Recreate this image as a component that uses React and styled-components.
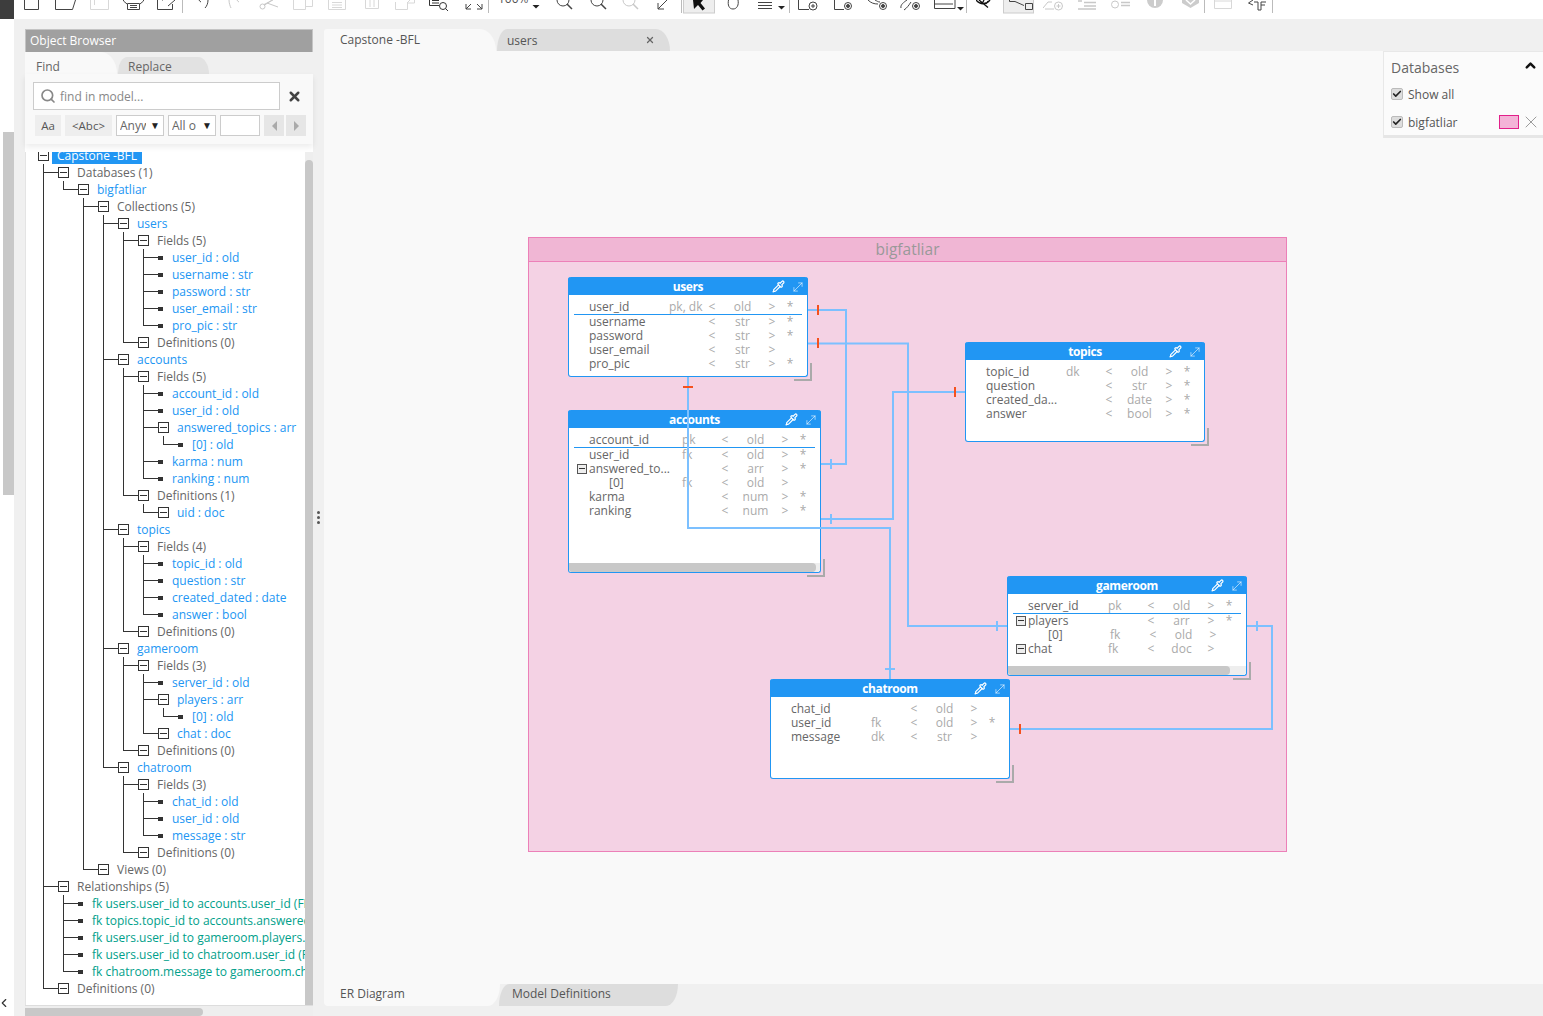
import React from 'react'
import styled, { createGlobalStyle } from 'styled-components'
import { MoveDiagonal, Pipette, Search, X, ChevronLeft, Check, ChevronUp } from 'lucide-react'

const Global = createGlobalStyle`
  html, body { margin: 0; height: 100%; overflow: hidden; background: #f0f0f0; }
  body { font-family: "Open Sans", "Liberation Sans", sans-serif; color: #666; }
  * { box-sizing: border-box; }
`

const Page = styled.div`
  display: flex;
  width: 1543px;
  height: 1016px;
  overflow: hidden;
`

const Rail = styled.div`
  flex: none;
  width: 14px;
  background: #fff;
  display: flex;
  flex-direction: column;
  color: #333;
`
const RailTop = styled.div`
  height: 19px;
  background: #3d3d3d;
`
const RailThumb = styled.div`
  margin: 113px 0 0 3px;
  height: 363px;
  background: #c8c8c8;
`
const RailChevron = styled.div`
  margin-top: auto;
  height: 23px;
  margin-left: -3px;
`

const Shell = styled.div`
  flex: 1;
  min-width: 0;
  display: flex;
  flex-direction: column;
`

/* ---------- toolbar ---------- */

const Toolbar = styled.div`
  flex: none;
  height: 19px;
  background: #fff;
  display: flex;
  align-items: flex-start;
  overflow: hidden;
`
const Tool = styled.svg`
  flex: none;
  margin-left: ${p => p.$gap}px;
  fill: none;
  stroke: ${p => p.$tone || '#444'};
  stroke-width: 1;
`
const ToolSep = styled.div`
  flex: none;
  width: 1px;
  height: 13px;
  margin-left: ${p => p.$gap}px;
  background: #bbb;
`
const ZoomValue = styled.span`
  flex: none;
  width: 30px;
  margin-left: ${p => p.$gap}px;
  margin-top: -9px;
  font-size: 12px;
  line-height: 16px;
  color: #555;
`

const LIGHT = '#d8d8d8'
const MID = '#c8c8c8'
const caret = (x, y = 5) => <path d={`M${x} ${y}h7l-3.5 3.5z`} fill="#222" stroke="none" />

const tools = [
  { x: 24, w: 15, d: <path d="M.5 0V9.5H14.5V0" /> },
  { x: 55, w: 21, d: <path d="M.5 0V9.5H17.5L20.5 0" /> },
  { x: 90, w: 19, tone: LIGHT, d: <path d="M.5 0V9.5H18.5V0M4.5 0V5" /> },
  { x: 123, w: 21, d: <path d="M4.5 3.5H16.5V9.5H4.5ZM.5 0V1L4 4M20.5 0V1L17 4M7 5.5H14M7 7.5H14" /> },
  { x: 157, w: 21, d: <path d="M.5 0V9.5H15.5V4M11 6L18 0M6 0H5" /> },
  { sep: 182 },
  { x: 197, w: 12, d: <path d="M2 0C2.5 1 3 1.500 4 2M11 0C11 3 10 6 8 8" /> },
  { x: 228, w: 12, tone: MID, d: <path d="M1 0C1 3 2 6 3 8M9 0C9.500 1 10 1.500 11 2" /> },
  { x: 259, w: 21, tone: MID, d: <g><circle cx="3.500" cy="6.500" r="2.500" /><path d="M5 4.500L14 0M5 5.500L13 0M8 3L19 7" /></g> },
  { x: 293, w: 21, tone: LIGHT, d: <path d="M.5 0V9.500H12.500V0M13 6.500H19.500V0" /> },
  { x: 328, w: 19, tone: LIGHT, d: <path d="M.5 0V9.500H17.500V0M4 2.500H14M4 5H14M4 7.500H14" /> },
  { x: 365, w: 14, tone: LIGHT, d: <path d="M.5 0V8.500H13.500V0M5 0V7M9 0V7" /> },
  { x: 395, w: 21, tone: LIGHT, d: <path d="M.5 2V9.500H12.500V3H19.500V0M12 3L15 0" /> },
  { x: 429, w: 20, tone: '#333', d: <g><circle cx="14" cy="6" r="3.500" /><path d="M.5 0V5.500H10M3 3H10M3 .5H10M16.500 8.500L19 11" /></g> },
  { x: 465, w: 18, d: <path d="M1 9L6 4M1 4V9H6M17 9L12 4M17 4V9H12" /> },
  { sep: 488 },
  { text: 498 },
  { x: 532, w: 8, d: caret(.5) },
  { x: 556, w: 17, d: <g><circle cx="7" cy="0" r="6" /><path d="M11 4L16 9" strokeWidth="1.500" /></g> },
  { x: 590, w: 17, d: <g><circle cx="7" cy="0" r="6" /><path d="M11 4L16 9" strokeWidth="1.500" /></g> },
  { x: 622, w: 18, tone: MID, d: <g><circle cx="7" cy="0" r="6" /><path d="M11 4L16 9" strokeWidth="1.500" /></g> },
  { x: 657, w: 11, d: <path d="M1 9L10 0M1 3V9H7" /> },
  { sep: 681 },
  { x: 683, w: 33, d: <g><rect x=".5" y="-1" width="31" height="14" fill="#eee" stroke="#ccc" /><path d="M10 0H20L17.500 3L22 8.500L19.500 10.500L15 5L11 9Z" fill="#111" stroke="none" /></g> },
  { x: 727, w: 13, d: <path d="M1.500 0C.5 5 2 9 6 9C10 9 12 5 11 0" /> },
  { x: 758, w: 29, d: <g><path d="M0 2.500H14M0 5.500H14M0 8.500H14" strokeWidth="1.200" />{caret(20, 6)}</g> },
  { sep: 789 },
  { x: 798, w: 21, d: <g><circle cx="15" cy="6" r="4" /><path d="M.5 0V9.500H11M13 6H17M15 4V8" /></g> },
  { x: 834, w: 20, d: <g><circle cx="14" cy="6" r="3.500" /><circle cx="14" cy="6" r="1.500" fill="#444" /><path d="M.5 0V9.500H10" /></g> },
  { x: 868, w: 21, d: <g><circle cx="15" cy="6" r="3.500" /><circle cx="15" cy="6" r="1.500" fill="#444" /><path d="M0 0C3 3 6 4 10 4M7 0C9 1 10 2 12 2" /></g> },
  { x: 900, w: 21, d: <g><circle cx="16" cy="6" r="3.500" /><circle cx="16" cy="6" r="1.500" fill="#444" /><path d="M1 8C0 5 4 2 7 0M4 10C7 8 9 5 11 2" /></g> },
  { x: 934, w: 31, d: <g><path d="M.5 0V8.500H21V0M.5 4H19" />{caret(23, 7)}</g> },
  { sep: 966 },
  { x: 976, w: 19, tone: '#111', d: <path d="M0 0C4 5 10 5 14 0M3 0L12 7.500M6 4L8 0M10 4L12 1" strokeWidth="1.300" /> },
  { x: 1003, w: 32, d: <g><rect x=".5" y="-1" width="30" height="14" fill="#eee" stroke="#ccc" /><path d="M6.500 0V1.500H12L21 5.500M22.500 3.500H29.500V9.500H22.500Z" /></g> },
  { x: 1043, w: 21, tone: MID, d: <g><circle cx="15.500" cy="6" r="4" /><path d="M0 8L5 2H9M2 9H11M13.500 6H17.500M15.500 4V8" /></g> },
  { x: 1077, w: 20, tone: MID, d: <path d="M7 2.500H19M7 6H19M1 9H19M1 1H5" strokeWidth="1.500" /> },
  { x: 1111, w: 20, tone: MID, d: <g><circle cx="4" cy="4.500" r="3.500" /><path d="M10 2.500H19M10 5.500H19" strokeWidth="1.500" /></g> },
  { x: 1146, w: 18, d: <g><circle cx="9" cy="0" r="8" fill="#ccc" stroke="none" /><path d="M9 0V6" stroke="#fff" strokeWidth="2" /></g> },
  { x: 1182, w: 17, d: <g><path d="M0 0H17V3L8.500 8L0 3Z" fill="#ccc" stroke="none" /><path d="M4 0L8.500 4L13 0" stroke="#fff" strokeWidth="1.500" /></g> },
  { sep: 1204 },
  { x: 1214, w: 18, tone: LIGHT, d: <path d="M.5 0V8.500H17.500V0M.5 1H17" /> },
  { x: 1248, w: 18, d: <path d="M5 0L.5 3L5 5M6 2H10V10H13V2H18M13 5H17" /> },
  { sep: 1272 }
]

function ToolRow() {
  let end = 14
  return (
    <Toolbar>
      {tools.map((t, i) => {
        const at = t.sep ?? t.text ?? t.x
        const gap = at - end
        if (t.sep) {
          end = at + 1
          return <ToolSep key={i} $gap={gap} />
        }
        if (t.text) {
          end = at + 30
          return <ZoomValue key={i} $gap={gap}>100%</ZoomValue>
        }
        end = at + t.w
        return (
          <Tool key={i} $gap={gap} $tone={t.tone} width={t.w} height="19" viewBox={`0 0 ${t.w} 19`}>
            {t.d}
          </Tool>
        )
      })}
    </Toolbar>
  )
}

/* ---------- object browser ---------- */

const Workspace = styled.div`
  flex: 1;
  min-height: 0;
  display: flex;
`
const Browser = styled.aside`
  flex: none;
  width: 288px;
  margin: 10px 0 0 11px;
  display: flex;
  flex-direction: column;
  background: #fff;
`
const BrowserTitle = styled.div`
  flex: none;
  height: 23px;
  padding-left: 4px;
  background: #a0a0a0;
  border: 1px solid #c4c4c4;
  border-bottom: 0;
  color: #fff;
  font-size: 12px;
  line-height: 22px;
`
const FindTabs = styled.div`
  flex: none;
  height: 22px;
  display: flex;
  background: #f0f0f0;
`
const FindTab = styled.div`
  width: ${p => (p.$active ? 92 : 91)}px;
  margin-left: ${p => (p.$active ? 0 : 1)}px;
  padding-left: ${p => (p.$active ? 11 : 10)}px;
  background: ${p => (p.$active ? '#f9f9f9' : '#e2e2e2')};
  border-radius: ${p => (p.$active ? '0 16px 0 0 / 0 22px 0 0' : '12px 14px 0 0 / 20px 22px 0 0')};
  font-size: 12px;
  height: ${p => (p.$active ? 22 : 17)}px;
  margin-top: ${p => (p.$active ? 0 : 5)}px;
  line-height: ${p => (p.$active ? 29 : 19)}px;
`
const FindArea = styled.div`
  flex: none;
  height: 70px;
  padding: 8px 8px 0;
  background: #f9f9f9;
  box-shadow: 0 3px 6px rgba(0, 0, 0, 0.08);
  position: relative;
  z-index: 1;
`
const FindRow = styled.div`
  display: flex;
  align-items: center;
`
const FindInput = styled.div`
  width: 247px;
  height: 28px;
  background: #fff;
  border: 1px solid #ccc;
  display: flex;
  align-items: center;
  gap: 4px;
  padding-left: 6px;
  color: #888;
  font-size: 12px;
`
const ClearButton = styled.div`
  display: flex;
  margin: 1px 0 0 7px;
  color: #444;
`
const OptionRow = styled.div`
  display: flex;
  margin: 5px 0 0 2px;
  gap: 4px;
`
const OptionButton = styled.div`
  width: ${p => p.$w}px;
  height: 21px;
  background: #eee;
  font-size: 11.5px;
  line-height: 21px;
  text-align: center;
  color: #555;
`
const OptionSelect = styled.div`
  width: 48px;
  height: 21px;
  background: #fff;
  border: 1px solid #ccc;
  display: flex;
  align-items: center;
  justify-content: space-between;
  padding: 0 3px;
  font-size: 12px;
  color: #666;
  overflow: hidden;
  & > span:first-child { width: 26px; overflow: hidden; white-space: nowrap; }
  & > span:last-child { font-size: 10px; color: #222; margin-top: -2px; }
`
const OptionField = styled.div`
  width: 40px;
  height: 21px;
  background: #fff;
  border: 1px solid #ccc;
`
const PagerButton = styled.div`
  width: 20px;
  height: 21px;
  margin-right: -2px;
  background: #e6e6e6;
  display: flex;
  align-items: center;
  justify-content: center;
  &::before {
    content: '';
    border: 5px solid transparent;
    border-left-color: ${p => (p.$dir === 'next' ? '#aaa' : 'transparent')};
    border-right-color: ${p => (p.$dir === 'prev' ? '#aaa' : 'transparent')};
    margin-left: ${p => (p.$dir === 'next' ? 5 : -5)}px;
  }
`
const TreePane = styled.div`
  flex: 1;
  min-height: 0;
  margin-top: 8px;
  display: flex;
  border-left: 1px solid #e4e4e4;
`
const TreeClip = styled.div`
  flex: 1;
  min-width: 0;
  overflow: hidden;
`
const VerticalBar = styled.div`
  flex: none;
  width: 8px;
  background: #eee;
  padding-top: 8px;
  &::before {
    content: '';
    display: block;
    height: 100%;
    background: #c8c8c8;
    border-radius: 4px 4px 0 0;
  }
`
const HorizontalBar = styled.div`
  flex: none;
  height: 11px;
  border-top: 1px solid #ddd;
  background: #eee;
  padding-top: 2px;
  &::before {
    content: '';
    display: block;
    width: 178px;
    height: 8px;
    background: #c8c8c8;
    border-radius: 0 4px 4px 0;
  }
`
const TreeList = styled.ul`
  list-style: none;
  margin: ${p => (p.$root ? '-5px 0 0 -3px' : '0 0 0 20px')};
  padding: 0;
`
const TreeItem = styled.li`
  position: relative;
  &::before {
    content: '';
    display: ${p => (p.$root ? 'none' : 'block')};
    position: absolute;
    left: 0;
    top: 0;
    bottom: 0;
    width: 1px;
    background: #333;
  }
  &:last-child::before { bottom: auto; height: 9px; }
  &::after {
    content: '';
    display: ${p => (p.$root ? 'none' : 'block')};
    position: absolute;
    left: 0;
    top: 8px;
    width: 15px;
    height: 1px;
    background: #333;
  }
`
const TreeRow = styled.div`
  height: 17px;
  display: flex;
  align-items: center;
  padding-left: 15px;
  white-space: nowrap;
  font-size: 12px;
  line-height: 17px;
`
const ToggleBox = styled.span`
  flex: none;
  width: 11px;
  height: 11px;
  background: #fff;
  border: 1px solid #333;
  position: relative;
  &::after {
    content: '';
    position: absolute;
    left: 1px;
    right: 1px;
    top: 4px;
    height: 1px;
    background: #333;
  }
`
const LeafDot = styled.span`
  flex: none;
  width: 5px;
  height: 4px;
  background: #333;
`
const TreeLabel = styled.span`
  margin-left: ${p => (p.$leaf ? 9 : p.$root ? 3 : 8)}px;
  padding: ${p => (p.$root ? '0 5px' : 0)};
  background: ${p => (p.$root ? '#2196f3' : 'none')};
  color: ${p => (p.$root ? '#fff' : p.$tone === 'blue' ? '#2196f3' : p.$tone === 'teal' ? '#00a08a' : '#666')};
`

const leaf = (label, tone = 'blue') => ({ label, tone, leaf: true })
const group = (label, tone, kids = []) => ({ label, tone, kids })

const model = group('Capstone -BFL', 'root', [
  group('Databases (1)', 'plain', [
    group('bigfatliar', 'blue', [
      group('Collections (5)', 'plain', [
        group('users', 'blue', [
          group('Fields (5)', 'plain', [
            leaf('user_id : old'), leaf('username : str'), leaf('password : str'), leaf('user_email : str'), leaf('pro_pic : str')
          ]),
          group('Definitions (0)', 'plain')
        ]),
        group('accounts', 'blue', [
          group('Fields (5)', 'plain', [
            leaf('account_id : old'), leaf('user_id : old'),
            group('answered_topics : arr', 'blue', [leaf('[0] : old')]),
            leaf('karma : num'), leaf('ranking : num')
          ]),
          group('Definitions (1)', 'plain', [group('uid : doc', 'blue')])
        ]),
        group('topics', 'blue', [
          group('Fields (4)', 'plain', [
            leaf('topic_id : old'), leaf('question : str'), leaf('created_dated : date'), leaf('answer : bool')
          ]),
          group('Definitions (0)', 'plain')
        ]),
        group('gameroom', 'blue', [
          group('Fields (3)', 'plain', [
            leaf('server_id : old'),
            group('players : arr', 'blue', [leaf('[0] : old')]),
            group('chat : doc', 'blue')
          ]),
          group('Definitions (0)', 'plain')
        ]),
        group('chatroom', 'blue', [
          group('Fields (3)', 'plain', [
            leaf('chat_id : old'), leaf('user_id : old'), leaf('message : str')
          ]),
          group('Definitions (0)', 'plain')
        ])
      ]),
      group('Views (0)', 'plain')
    ])
  ]),
  group('Relationships (5)', 'plain', [
    leaf('fk users.user_id to accounts.user_id (FK)', 'teal'),
    leaf('fk topics.topic_id to accounts.answered_topics', 'teal'),
    leaf('fk users.user_id to gameroom.players.[0] (FK)', 'teal'),
    leaf('fk users.user_id to chatroom.user_id (FK)', 'teal'),
    leaf('fk chatroom.message to gameroom.chat (FK)', 'teal')
  ]),
  group('Definitions (0)', 'plain')
])

function TreeNode({ node, root }) {
  return (
    <TreeItem $root={root}>
      <TreeRow>
        {node.leaf ? <LeafDot /> : <ToggleBox />}
        <TreeLabel $leaf={node.leaf} $root={root} $tone={node.tone}>{node.label}</TreeLabel>
      </TreeRow>
      {node.kids && node.kids.length > 0 && (
        <TreeList>
          {node.kids.map((kid, i) => <TreeNode key={i} node={kid} />)}
        </TreeList>
      )}
    </TreeItem>
  )
}

const Splitter = styled.div`
  flex: none;
  width: 11px;
  display: flex;
  flex-direction: column;
  align-items: center;
  justify-content: center;
  gap: 2px;
  & > i { width: 3px; height: 3px; border-radius: 50%; background: #555; }
`

/* ---------- main area ---------- */

const Main = styled.main`
  flex: 1;
  min-width: 0;
  display: flex;
  flex-direction: column;
`
const TabStrip = styled.div`
  flex: none;
  height: 32px;
  padding-top: 10px;
  display: flex;
`
const DocTab = styled.div`
  height: 22px;
  width: ${p => (p.$active ? 172 : 173)}px;
  margin-left: ${p => (p.$active ? 0 : 1)}px;
  padding: 0 15px 0 ${p => (p.$active ? 16 : 10)}px;
  background: ${p => (p.$active ? '#f9f9f9' : '#dddddd')};
  border-radius: ${p => (p.$active ? '3px 16px 0 0 / 3px 22px 0 0' : '10px 14px 0 0 / 22px 22px 0 0')};
  display: flex;
  align-items: center;
  justify-content: space-between;
  font-size: 12px;
  color: #555;
  padding-bottom: ${p => (p.$active ? 2 : 0)}px;
`
const TabClose = styled.span`
  display: flex;
  color: #666;
`
const Canvas = styled.div`
  flex: 1;
  min-height: 0;
  position: relative;
  background: #f9f9f9;
`
const SheetStrip = styled.div`
  flex: none;
  height: 32px;
  display: flex;
`
const SheetTab = styled.div`
  height: 22px;
  width: ${p => (p.$active ? 176 : 179)}px;
  padding-left: ${p => (p.$active ? 16 : 13)}px;
  margin-left: ${p => (p.$active ? 0 : -1)}px;
  background: ${p => (p.$active ? '#f9f9f9' : '#dddddd')};
  border-radius: ${p => (p.$active ? '0 0 12px 4px / 0 0 22px 4px' : '10px 0 12px 0 / 22px 0 22px 0')};
  font-size: 12px;
  line-height: 20px;
  color: #555;
`

const DbPanel = styled.section`
  position: absolute;
  right: 0;
  top: 0;
  width: 160px;
  height: 87px;
  background: #fbfbfb;
  border-left: 1px solid #e8e8e8;
  border-top: 1px solid #e8e8e8;
  border-bottom: 3px solid #e6e6e6;
  padding: 6px 0 0 7px;
  z-index: 3;
`
const DbPanelHead = styled.div`
  display: flex;
  align-items: center;
  justify-content: space-between;
  padding-right: 5px;
  font-size: 14px;
  line-height: 20px;
  color: #666;
  & > svg { margin-top: -5px; color: #111; }
`
const DbRow = styled.div`
  display: flex;
  align-items: center;
  height: 16px;
  margin-top: ${p => p.$top}px;
  font-size: 12px;
  color: #555;
  padding-right: 2px;
`
const CheckMark = styled.span`
  flex: none;
  width: 12px;
  height: 12px;
  margin-right: 5px;
  background: #ddd;
  border: 1px solid #bbb;
  border-radius: 2px;
  display: flex;
  align-items: center;
  justify-content: center;
  color: #222;
`
const Swatch = styled.span`
  flex: none;
  width: 20px;
  height: 14px;
  margin-left: auto;
  background: #f4b3d7;
  border: 1px solid #e2208a;
`
const SwatchRemove = styled.span`
  display: flex;
  margin-left: 2px;
  color: #888;
`

/* ---------- er diagram ---------- */

const Database = styled.section`
  position: absolute;
  left: 204px;
  top: 186px;
  width: 759px;
  height: 615px;
  background: #f4d2e4;
  border: 1px solid #ec80b8;
`
const DatabaseTitle = styled.div`
  height: 24px;
  background: #f0b6d4;
  border-bottom: 1px solid #ec80b8;
  text-align: center;
  font-size: 15.5px;
  line-height: 23px;
  color: #999;
`
const EntityCard = styled.article`
  position: absolute;
  left: ${p => p.$x - 529}px;
  top: ${p => p.$y - 238}px;
  width: ${p => p.$w}px;
  height: ${p => p.$h}px;
  background: #fff;
  border: 1px solid #2196f3;
  border-top: 0;
  border-radius: 3px;
  display: flex;
  flex-direction: column;
  &::after {
    content: '';
    position: absolute;
    right: -5px;
    bottom: -5px;
    width: 16px;
    height: 16px;
    border-right: 2px solid #aaa;
    border-bottom: 2px solid #aaa;
  }
`
const EntityHead = styled.header`
  flex: none;
  height: 18px;
  margin: 0 -1px;
  background: #2196f3;
  border-radius: 3px 3px 0 0;
  display: grid;
  grid-template-columns: 1fr auto 1fr;
  align-items: center;
  color: #fff;
`
const EntityName = styled.h3`
  grid-column: 2;
  margin: 0;
  padding-top: 1px;
  font-size: 12px;
  font-weight: 700;
  letter-spacing: -0.4px;
  line-height: 18px;
`
const EntityTools = styled.div`
  grid-column: 3;
  justify-self: end;
  display: flex;
  align-items: center;
  gap: 6px;
  padding-right: 3px;
`
const FieldRows = styled.div`
  flex: 1;
  padding-top: 5px;
`
const FieldRow = styled.div`
  display: grid;
  grid-template-columns: 12px ${p => 80 + (p.$wide ? 13 : 0)}px 33px 20px 40px 20px 16px;
  padding-left: ${p => 8 + (p.$nudge ? 2 : 0)}px;
  height: 14px;
  font-size: 12px;
  line-height: 14px;
  color: #aaa;
  white-space: nowrap;
`
const FieldRule = styled.div`
  height: 1px;
  margin: 0 5px;
  background: #2196f3;
`
const FieldToggle = styled.span`
  width: 10px;
  height: 10px;
  margin-top: 2px;
  border: 1px solid #555;
  background: #eee;
  position: relative;
  &::after {
    content: '';
    position: absolute;
    left: 1px;
    right: 1px;
    top: 3px;
    height: 1px;
    background: #333;
  }
`
const FieldName = styled.span`
  color: #666;
  padding-left: ${p => (p.$sub ? 20 : 0)}px;
  margin-left: ${p => (p.$nudge ? -2 : 0)}px;
`
const FieldCell = styled.span`
  text-align: center;
  padding-left: ${p => (p.$type ? 1 : 0)}px;
`
const EntityScroll = styled.div`
  flex: none;
  height: 9px;
  background: #eee;
  border-radius: 0 0 3px 3px;
  &::before {
    content: '';
    display: block;
    height: 100%;
    width: ${p => p.$thumb}px;
    background: #c8c8c8;
    border-radius: 0 4px 4px 3px;
  }
`
const LineLayer = styled.svg`
  position: absolute;
  left: -1px;
  top: -1px;
  fill: none;
  pointer-events: none;
`

const f = (name, key, type, star, extra) => ({ name, key, type, star, ...extra })

const entities = [
  { name: 'users', x: 568, y: 277, w: 240, h: 100, ruled: true, fields: [
    f('user_id', 'pk, dk', 'old', true), f('username', '', 'str', true), f('password', '', 'str', true),
    f('user_email', '', 'str', false), f('pro_pic', '', 'str', true)
  ] },
  { name: 'accounts', x: 568, y: 410, w: 253, h: 163, ruled: true, wide: true, thumb: 247, fields: [
    f('account_id', 'pk', 'old', true), f('user_id', 'fk', 'old', true),
    f('answered_to...', '', 'arr', true, { toggle: true }), f('[0]', 'fk', 'old', false, { sub: true }),
    f('karma', '', 'num', true), f('ranking', '', 'num', true)
  ] },
  { name: 'topics', x: 965, y: 342, w: 240, h: 100, fields: [
    f('topic_id', 'dk', 'old', true), f('question', '', 'str', true),
    f('created_da...', '', 'date', true), f('answer', '', 'bool', true)
  ] },
  { name: 'gameroom', x: 1007, y: 576, w: 240, h: 100, ruled: true, thumb: 222, fields: [
    f('server_id', 'pk', 'old', true), f('players', '', 'arr', true, { toggle: true }),
    f('[0]', 'fk', 'old', false, { sub: true, nudge: true }), f('chat', 'fk', 'doc', false, { toggle: true })
  ] },
  { name: 'chatroom', x: 770, y: 679, w: 240, h: 100, fields: [
    f('chat_id', '', 'old', false), f('user_id', 'fk', 'old', true), f('message', 'dk', 'str', false)
  ] }
]

function Entity({ e }) {
  return (
    <EntityCard $x={e.x} $y={e.y} $w={e.w} $h={e.h}>
      <EntityHead>
        <EntityName>{e.name}</EntityName>
        <EntityTools>
          <Pipette size={13} strokeWidth={2.2} />
          <MoveDiagonal size={14} strokeWidth={1} />
        </EntityTools>
      </EntityHead>
      <FieldRows>
        {e.fields.map((row, i) => (
          <React.Fragment key={i}>
            <FieldRow $wide={e.wide} $nudge={row.nudge}>
              {row.toggle ? <FieldToggle /> : <span />}
              <FieldName $sub={row.sub} $nudge={row.nudge}>{row.name}</FieldName>
              <span>{row.key}</span>
              <FieldCell>&lt;</FieldCell>
              <FieldCell $type>{row.type}</FieldCell>
              <FieldCell>&gt;</FieldCell>
              <FieldCell>{row.star ? '*' : ''}</FieldCell>
            </FieldRow>
            {i === 0 && e.ruled && <FieldRule />}
          </React.Fragment>
        ))}
      </FieldRows>
      {e.thumb && <EntityScroll $thumb={e.thumb} />}
    </EntityCard>
  )
}

const BLUE = '#7cc0ff'
const RED = '#f4511e'

function Relations() {
  return (
    <LineLayer width="759" height="615" viewBox="528 237 759 615">
      <g stroke={BLUE} strokeWidth="2">
        <path d="M808 310H846V464H821" />
        <path d="M808 343.500H908V626H1007" />
        <path d="M688 377V528H890V679" />
        <path d="M965 392H893V519H821" />
        <path d="M1010 729H1272V626H1247" />
        <path d="M831 459V469M997 621V631M885 669H895M831 514V524M1257 621V631" />
      </g>
      <path d="M818 305V315M818 338V348M683 387H693M955 387V397M1020 724V734" stroke={RED} strokeWidth="2" />
    </LineLayer>
  )
}

export default function App() {
  return (
    <Page>
      <Global />
      <Rail>
        <RailTop />
        <RailThumb />
        <RailChevron><ChevronLeft size={14} strokeWidth={2} /></RailChevron>
      </Rail>
      <Shell>
        <ToolRow />
        <Workspace>
          <Browser>
            <BrowserTitle>Object Browser</BrowserTitle>
            <FindTabs>
              <FindTab $active>Find</FindTab>
              <FindTab>Replace</FindTab>
            </FindTabs>
            <FindArea>
              <FindRow>
                <FindInput><Search size={16} strokeWidth={2.5} color="#888" />find in model...</FindInput>
                <ClearButton><X size={15} strokeWidth={4} /></ClearButton>
              </FindRow>
              <OptionRow>
                <OptionButton $w={26}>Aa</OptionButton>
                <OptionButton $w={47}>&lt;Abc&gt;</OptionButton>
                <OptionSelect><span>Anywhere</span><span>▼</span></OptionSelect>
                <OptionSelect><span>All o</span><span>▼</span></OptionSelect>
                <OptionField />
                <PagerButton $dir="prev" />
                <PagerButton $dir="next" />
              </OptionRow>
            </FindArea>
            <TreePane>
              <TreeClip>
                <TreeList $root><TreeNode node={model} root /></TreeList>
              </TreeClip>
              <VerticalBar />
            </TreePane>
            <HorizontalBar />
          </Browser>
          <Splitter><i /><i /><i /></Splitter>
          <Main>
            <TabStrip>
              <DocTab $active>Capstone -BFL</DocTab>
              <DocTab>users<TabClose><X size={10} strokeWidth={3} /></TabClose></DocTab>
            </TabStrip>
            <Canvas>
              <Database>
                <DatabaseTitle>bigfatliar</DatabaseTitle>
                {entities.map(e => <Entity key={e.name} e={e} />)}
                <Relations />
              </Database>
              <DbPanel>
                <DbPanelHead>Databases<ChevronUp size={15} strokeWidth={4} /></DbPanelHead>
                <DbRow $top={8}><CheckMark><Check size={10} strokeWidth={4} /></CheckMark>Show all</DbRow>
                <DbRow $top={12}>
                  <CheckMark><Check size={10} strokeWidth={4} /></CheckMark>bigfatliar
                  <Swatch />
                  <SwatchRemove><X size={20} strokeWidth={1} /></SwatchRemove>
                </DbRow>
              </DbPanel>
            </Canvas>
            <SheetStrip>
              <SheetTab $active>ER Diagram</SheetTab>
              <SheetTab>Model Definitions</SheetTab>
            </SheetStrip>
          </Main>
        </Workspace>
      </Shell>
    </Page>
  )
}
